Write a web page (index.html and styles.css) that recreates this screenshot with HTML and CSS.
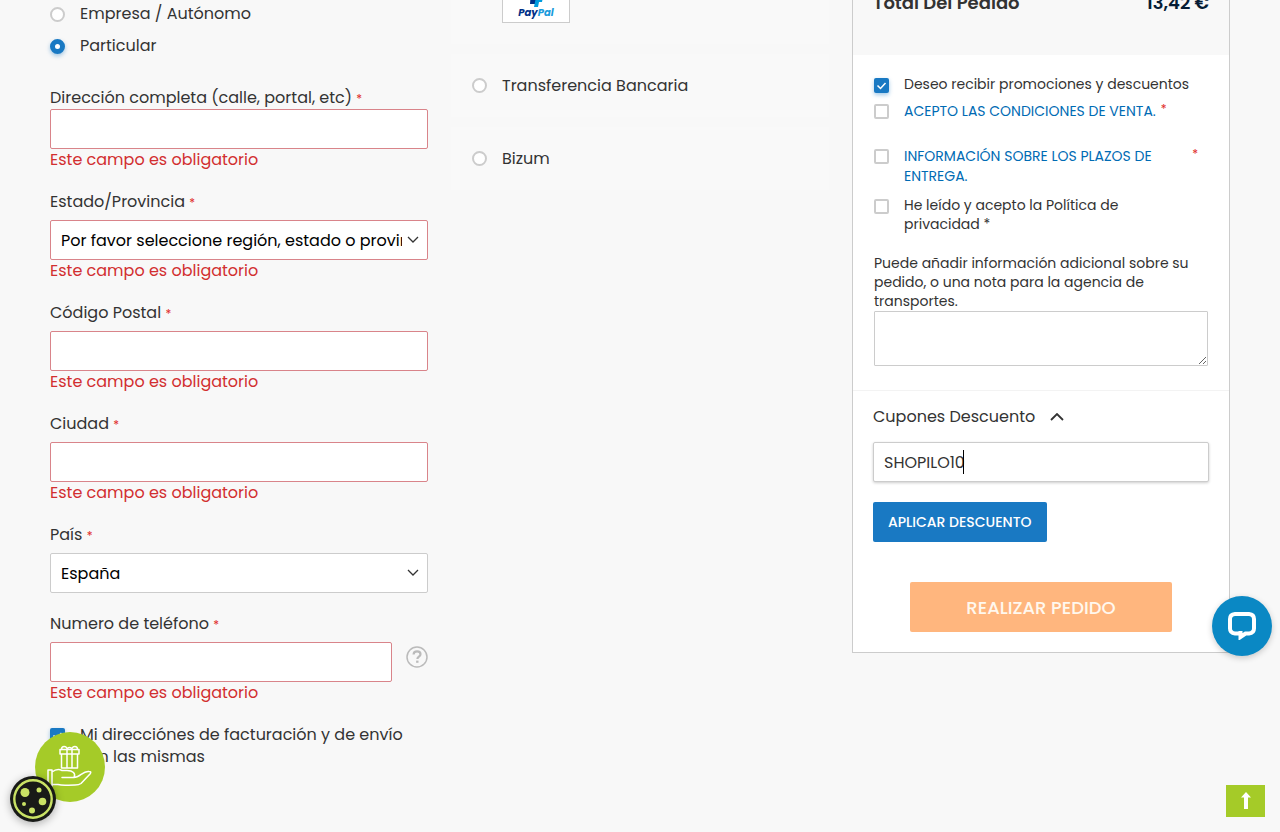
FILE: index.html
```html
<!DOCTYPE html>
<html lang="es">

<head>
    <meta charset="UTF-8">
    <meta name="viewport" content="width=device-width, initial-scale=1.0">
    <title>Finalizar compra</title>
    <link rel="stylesheet" href="styles.css">
</head>

<body>
    <form class="checkout">

        <!-- Shipping address -->
        <section class="address">
            <label class="option"><input type="radio" name="customer" value="empresa"> Empresa / Autónomo</label>
            <label class="option"><input type="radio" name="customer" value="particular" checked> Particular</label>

            <div class="field field-street">
                <label for="street">Dirección completa (calle, portal, etc) <span class="required">*</span></label>
                <input class="control invalid" type="text" id="street">
                <div class="error">Este campo es obligatorio</div>
            </div>

            <div class="field">
                <label for="region">Estado/Provincia <span class="required">*</span></label>
                <select class="control invalid" id="region">
                    <option>Por favor seleccione región, estado o provincia.</option>
                </select>
                <div class="error">Este campo es obligatorio</div>
            </div>

            <div class="field">
                <label for="postcode">Código Postal <span class="required">*</span></label>
                <input class="control invalid" type="text" id="postcode">
                <div class="error">Este campo es obligatorio</div>
            </div>

            <div class="field">
                <label for="city">Ciudad <span class="required">*</span></label>
                <input class="control invalid" type="text" id="city">
                <div class="error">Este campo es obligatorio</div>
            </div>

            <div class="field">
                <label for="country">País <span class="required">*</span></label>
                <select class="control" id="country">
                    <option>España</option>
                </select>
            </div>

            <div class="field">
                <label for="phone">Numero de teléfono <span class="required">*</span></label>
                <div class="with-help">
                    <input class="control invalid" type="tel" id="phone">
                    <button type="button" class="help" aria-label="Ayuda">
                        <svg width="22" height="22" viewBox="0 0 22 22" fill="none" stroke="#bbb">
                            <circle cx="11" cy="11" r="10" stroke-width="1.5" />
                            <path d="M7.6 8.6c0-2 1.5-3.2 3.5-3.2s3.4 1.2 3.4 2.9c0 2.4-3.1 2.4-3.1 4.7" stroke-width="2.2" />
                            <path d="M11.3 14.6v2.2" stroke-width="2.4" />
                        </svg>
                    </button>
                </div>
                <div class="error">Este campo es obligatorio</div>
            </div>

            <label class="same-address"><input type="checkbox" checked> <span>Mi direcciónes de facturación y de envío son las mismas</span></label>
        </section>

        <!-- Payment methods -->
        <section class="payment">
            <div class="method method-paypal">
                <div class="paypal">
                    <svg width="16" height="18" viewBox="0 0 16 18">
                        <path d="M3 0h9v12H8l-1 3H2z" fill="#003087" />
                        <path d="M8 8h7l-1 5h-3l-1 5H6z" fill="#009cde" />
                    </svg>
                    <div class="paypal-name">Pay<span>Pal</span></div>
                </div>
            </div>
            <label class="method"><input type="radio" name="payment"> Transferencia Bancaria</label>
            <label class="method"><input type="radio" name="payment"> Bizum</label>
        </section>

        <!-- Order summary -->
        <section class="summary">
            <div class="total">
                <span>Total Del Pedido</span>
                <span class="amount">13,42 €</span>
            </div>

            <div class="terms">
                <label class="term"><input type="checkbox" checked> <span>Deseo recibir promociones y descuentos</span></label>
                <div class="term term-sale">
                    <input type="checkbox" id="sale" aria-label="Acepto las condiciones de venta">
                    <a href="#">ACEPTO LAS CONDICIONES DE VENTA.</a>
                    <span class="required">*</span>
                </div>
                <div class="term term-delivery">
                    <input type="checkbox" id="delivery" aria-label="Información sobre los plazos de entrega">
                    <a href="#">INFORMACIÓN SOBRE LOS PLAZOS DE ENTREGA.</a>
                    <span class="required">*</span>
                </div>
                <label class="term term-privacy"><input type="checkbox"> <span>He leído y acepto la Política de privacidad *</span></label>

                <label class="note-label" for="note">Puede añadir información adicional sobre su pedido, o una nota para la agencia de transportes.</label>
                <textarea class="note" id="note"></textarea>
            </div>

            <div class="coupon">
                <label class="coupon-title" for="coupon">Cupones Descuento
                    <svg width="14" height="8" viewBox="0 0 14 8" fill="none" stroke="#333" stroke-width="1.8">
                        <path d="M1 7l6-6 6 6" />
                    </svg>
                </label>
                <div class="coupon-box">
                    <input class="control" type="text" id="coupon" value="SHOPILO10">
                    <span class="caret"></span>
                </div>
                <button type="button" class="apply">APLICAR DESCUENTO</button>
                <button type="button" class="place-order">REALIZAR PEDIDO</button>
            </div>
        </section>
    </form>

    <!-- Floating buttons -->
    <button class="gift" aria-label="Regalos">
        <svg width="46" height="44" viewBox="0 0 46 44" fill="none" stroke="#fff" stroke-width="1.5" stroke-linejoin="round" stroke-linecap="round">
            <path d="M14.500 9v14h16V9M20 9v14M25 9v14M13 4.500h19V9H13z" />
            <path d="M20 4.500V9M25 4.500V9M20.500 4.500c-1-4-6-4-6 0M24.500 4.500c1-4 6-4 6 0M20.500 3.500q2-2 4 0" />
            <path d="M1 25h4v16H1zM5 27c4-3 7-3 10-1.500h5c6 0 9 3 7 7H15M27 32.500c6 0 9-7 15-6q3 0 1 2.500l-9 9.500q-2 1.500-6 1.500c-8 0-12 1-17-.5H5" />
        </svg>
    </button>

    <button class="cookies" aria-label="Cookies">
        <svg width="46" height="46" viewBox="0 0 46 46">
            <circle cx="23" cy="23" r="23" fill="#181a17" />
            <circle cx="23" cy="23" r="18.700" fill="none" stroke="#c9e265" stroke-width="2.400" />
            <g fill="#c9e265">
                <circle cx="15" cy="16.500" r="4.500" />
                <circle cx="29" cy="14" r="2.500" />
                <circle cx="32.500" cy="25.500" r="3.800" />
                <circle cx="14" cy="28" r="2" />
                <circle cx="22" cy="34.500" r="3" />
            </g>
        </svg>
    </button>

    <button class="chat" aria-label="Chat">
        <svg width="28" height="28" viewBox="0 0 28 28" fill="none">
            <path d="M11 21.500H7q-5-.5-5-5V7q0-4.500 5-5h14q5 .5 5 5v9.500q0 4.500-5 5h-3.500l-5 3.500v-6" stroke="#fff" stroke-width="4" />
        </svg>
    </button>

    <a class="to-top" href="#" aria-label="Subir">
        <svg width="10" height="18" viewBox="0 0 10 18">
            <path d="M5 0l5 5.500H7V17H3V5.500H0z" fill="#fff" />
        </svg>
    </a>
</body>

</html>
```

FILE: styles.css
```css
* {
    box-sizing: border-box;
}

body {
    margin: 0;
    background-color: #f8f8f8;
    font-family: Poppins, Inter, sans-serif;
    font-size: 16px;
    line-height: 22px;
    color: #333;
    overflow: hidden;
}

input,
select,
textarea,
button {
    margin: 0;
    font-family: inherit;
    font-size: 16px;
}

button {
    border: none;
    padding: 0;
    cursor: pointer;
}

.checkout {
    display: grid;
    grid-template-columns: repeat(3, minmax(0, 1fr));
    gap: 23px;
    align-items: start;
    margin-top: -20px;
    padding: 0 50px;
}

/* Radios and checkboxes */
input[type="radio"],
input[type="checkbox"] {
    appearance: none;
    flex: none;
    width: 15px;
    height: 15px;
    border: 2px solid #ccc;
    border-radius: 2px;
    background-color: white;
}

input[type="radio"] {
    border-radius: 50%;
}

input[type="radio"]:checked {
    border: 5px solid #1979c3;
    box-shadow: 0 2px 4px rgba(25, 121, 195, 0.4);
}

input[type="checkbox"]:checked {
    border: none;
    background: #1979c3 url("data:image/svg+xml,%3Csvg xmlns='http://www.w3.org/2000/svg' viewBox='0 0 15 15'%3E%3Cpath d='M3.500 7.500l3 3 5-5.500' fill='none' stroke='white' stroke-width='1.500'/%3E%3C/svg%3E");
    box-shadow: 0 2px 4px rgba(25, 121, 195, 0.4);
}

/* Address */
.address {
    padding-top: 18px;
}

.option {
    display: flex;
    align-items: center;
    gap: 15px;
    height: 32px;
}

.field {
    margin-bottom: 20px;
}

.field > label {
    display: block;
    margin-bottom: 7px;
}

.field-street {
    margin-top: 25px;
}

.field-street > label {
    margin-bottom: 0;
}

.required {
    color: #e02b27;
    font-size: 12px;
    line-height: 12px;
}

.control {
    display: block;
    width: 100%;
    height: 40px;
    padding: 0 10px;
    border: 1px solid #ccc;
    border-radius: 2px;
    background-color: white;
    color: #333;
    outline: none;
}

select.control {
    appearance: none;
    padding-right: 25px;
    color: black;
    background: white url("data:image/svg+xml,%3Csvg xmlns='http://www.w3.org/2000/svg' viewBox='0 0 12 8'%3E%3Cpath d='M1 1l5 5 5-5' fill='none' stroke='%23333' stroke-width='1.300'/%3E%3C/svg%3E") no-repeat right 8px center / 12px 8px;
}

.control.invalid {
    border-color: #d9848a;
}

.error {
    color: #d22f30;
}

.with-help {
    display: flex;
    gap: 14px;
}

.help {
    height: 22px;
    margin-top: 4px;
    background: none;
}

.same-address {
    display: flex;
    gap: 15px;
}

.same-address input {
    margin-top: 4px;
}

/* Payment */
.payment {
    display: grid;
    gap: 10px;
}

.method {
    display: flex;
    align-items: center;
    gap: 15px;
    height: 63px;
    padding: 0 21px;
    background-color: #f9f9f9;
}

.method-paypal {
    height: 64px;
    padding-left: 51px;
    align-items: flex-start;
}

.paypal {
    display: flex;
    flex-direction: column;
    align-items: center;
    width: 68px;
    height: 43px;
    padding-top: 8px;
    border: 1px solid #ccc;
    background-color: white;
}

.paypal-name {
    color: #003087;
    font-size: 10px;
    font-weight: 700;
    font-style: italic;
    line-height: 12px;
}

.paypal-name span {
    color: #1a9bdc;
}

/* Summary */
.summary {
    border: 1px solid #ccc;
    background-color: white;
}

.total {
    display: flex;
    justify-content: space-between;
    height: 74px;
    padding: 10px 20px;
    background-color: #f8f8f8;
    font-size: 18px;
    font-weight: 600;
    line-height: 24px;
}

.amount {
    color: #061d35;
}

.terms {
    padding: 20px 21px 24px;
    border-bottom: 1px solid #f3f3f3;
    font-size: 14px;
    line-height: 19px;
}

.term {
    display: flex;
    align-items: flex-start;
    gap: 15px;
}

.term input {
    margin-top: 3px;
}

.term a {
    color: #006bb4;
    line-height: 20px;
    text-decoration: none;
}

.term .required {
    line-height: 16px;
}

.term-sale {
    margin: 7px 0 25px;
}

.term-sale .required {
    margin-left: -10px;
}

.term-delivery {
    margin-bottom: 10px;
}

.term-delivery a {
    flex: 1;
}

.term-delivery .required {
    margin-right: 10px;
}

.term-privacy {
    margin-bottom: 20px;
    padding-right: 30px;
}

.note-label {
    display: block;
}

.note {
    display: block;
    width: 100%;
    height: 55px;
    border: 1px solid #ccc;
    border-radius: 1px;
}

.coupon {
    display: flex;
    flex-direction: column;
    padding: 16px 20px 20px;
}

.coupon-title {
    display: flex;
    align-items: center;
    gap: 15px;
    margin-bottom: 15px;
    line-height: 20px;
}

.coupon-box {
    position: relative;
    margin-bottom: 20px;
}

.coupon-box .control {
    box-shadow: 0 1px 3px rgba(0, 0, 0, 0.2);
}

.caret {
    position: absolute;
    top: 8px;
    left: 90px;
    width: 1px;
    height: 24px;
    background-color: black;
}

.apply {
    align-self: flex-start;
    height: 40px;
    margin-bottom: 40px;
    padding: 0 15px;
    border-radius: 2px;
    background-color: #1979c3;
    color: white;
    font-size: 14px;
    font-weight: 500;
}

.place-order {
    align-self: center;
    width: 78%;
    height: 50px;
    border-radius: 2px;
    background-color: #ffb67e;
    color: #fff8ee;
    font-size: 18px;
    font-weight: 500;
}

/* Floating buttons */
.gift,
.cookies,
.chat,
.to-top {
    position: fixed;
    display: flex;
    align-items: center;
    justify-content: center;
}

.gift {
    left: 35px;
    bottom: 30px;
    width: 70px;
    height: 70px;
    border-radius: 50%;
    background-color: #a5cb28;
}

.cookies {
    left: 10px;
    bottom: 10px;
    border-radius: 50%;
    background: none;
    box-shadow: 0 2px 8px rgba(0, 0, 0, 0.3);
}

.chat {
    right: 8px;
    bottom: 176px;
    width: 60px;
    height: 60px;
    border-radius: 50%;
    background-color: #0a88c4;
    box-shadow: 0 2px 6px rgba(0, 0, 0, 0.2);
}

.to-top {
    right: 15px;
    bottom: 15px;
    width: 39px;
    height: 32px;
    background-color: #a5cb28;
}
```
